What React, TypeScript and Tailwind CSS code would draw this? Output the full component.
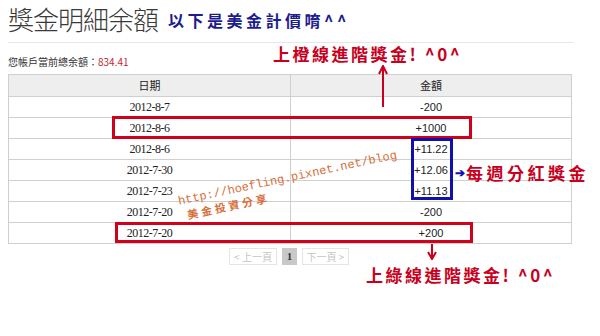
const rows = [
  { date: "2012-8-7", amount: "-200" },
  { date: "2012-8-6", amount: "+1000" },
  { date: "2012-8-6", amount: "+11.22" },
  { date: "2012-7-30", amount: "+12.06" },
  { date: "2012-7-23", amount: "+11.13" },
  { date: "2012-7-20", amount: "-200" },
  { date: "2012-7-20", amount: "+200" },
];

const cjk = "font-['Noto_Sans_CJK_TC',sans-serif]";

function ArrowUp() {
  return (
    <svg width="10" height="42" viewBox="0 0 10 42" className="absolute left-[378px] top-[65px]">
      <line x1="5" y1="3" x2="5" y2="42" stroke="#c8001e" strokeWidth="2" />
      <path d="M1 9 L5 1 L9 9" fill="none" stroke="#c8001e" strokeWidth="2" />
    </svg>
  );
}

function ArrowDown() {
  return (
    <svg width="10" height="16" viewBox="0 0 10 16" className="absolute left-[427px] top-[244px]">
      <line x1="5" y1="0" x2="5" y2="14" stroke="#c8001e" strokeWidth="2" />
      <path d="M1 8 L5 15 L9 8" fill="none" stroke="#c8001e" strokeWidth="2" />
    </svg>
  );
}

export default function App() {
  return (
    <div className="relative w-[600px] h-[336px] overflow-hidden bg-white font-['Liberation_Sans',sans-serif] text-[#333]">
      <div className="mx-2 w-[565px] h-[43px] border-b border-[#e6e6e6] flex items-start pt-[2px] gap-[10px]">
        <h1 className={`${cjk} text-[26px] leading-[34px] font-light text-[#3a3a3a] tracking-[-1px]`}>獎金明細余額</h1>
        <span className={`${cjk} mt-[6px] text-[16px] font-bold text-[#1c1c8c] tracking-[3.5px]`}>以下是美金計價唷^^</span>
      </div>

      <div className={`${cjk} ml-2 mt-[12px] text-[10px] leading-[14px] text-[#333]`}>
        您帳戶當前總余額：<span className="text-[#c0282d]">834.41</span>
      </div>

      <table className="ml-2 mt-[5px] w-[564px] border-collapse border border-[#cfcfcf] text-[11px] text-[#222] table-fixed">
        <thead>
          <tr className="h-[22px] bg-[#eeeeee]">
            <th className={`${cjk} w-[282px] font-normal border border-[#cfcfcf]`}>日期</th>
            <th className={`${cjk} font-normal border border-[#cfcfcf]`}>金額</th>
          </tr>
        </thead>
        <tbody>
          {rows.map((r, i) => (
            <tr key={i} className="h-[21px]">
              <td className="text-center border border-[#cfcfcf] font-['Liberation_Serif',serif] text-[12px] tracking-[-0.5px]">{r.date}</td>
              <td className="text-center border border-[#cfcfcf]">{r.amount}</td>
            </tr>
          ))}
        </tbody>
      </table>

      <div className={`${cjk} mt-[4px] ml-[229px] flex gap-[5px] text-[10px] text-[#c4c4c4]`}>
        <span className="w-[48px] h-[17px] border border-[#e4e4e4] flex items-center justify-center">&lt; 上一頁</span>
        <span className="w-[15px] h-[17px] bg-[#c8c8c8] text-[#333] font-bold flex items-center justify-center font-['Liberation_Serif',serif] text-[11px]">1</span>
        <span className="w-[47px] h-[17px] border border-[#e4e4e4] flex items-center justify-center">下一頁 &gt;</span>
      </div>

      {/* annotations */}
      <div className="absolute left-[112px] top-[116px] w-[360px] h-[23px] border-[3px] border-[#d0021b]" />
      <div className="absolute left-[115px] top-[222px] w-[358px] h-[21px] border-[3px] border-[#d0021b]" />
      <div className="absolute left-[411px] top-[138px] w-[42px] h-[62px] border-[3px] border-[#1010b0]" />

      <div className={`${cjk} absolute left-[273px] top-[41px] text-[17px] font-bold text-[#c8001e] tracking-[2.5px]`}>上橙線進階獎金! ^0^</div>
      <ArrowUp />

      <div className="absolute left-[455px] top-[160px] flex items-center">
        <span className="text-[#1010b0] text-[12px] font-bold">➔</span>
        <span className={`${cjk} ml-[1px] text-[17px] font-bold text-[#c8001e] tracking-[3.5px]`}>每週分紅獎金</span>
      </div>

      <ArrowDown />
      <div className={`${cjk} absolute left-[366px] top-[262px] text-[17px] font-bold text-[#c8001e] tracking-[2.5px]`}>上綠線進階獎金! ^0^</div>

      <div className="absolute left-[177px] top-[195px] origin-top-left -rotate-[12deg] text-[#d8703c]">
        <div className="font-['Liberation_Mono',monospace] text-[12px] leading-[14px]">http://hoefling.pixnet.net/blog</div>
        <div className={`${cjk} ml-[6px] text-[11px] font-bold tracking-[3px] leading-[14px]`}>美金投資分享</div>
      </div>
    </div>
  );
}
